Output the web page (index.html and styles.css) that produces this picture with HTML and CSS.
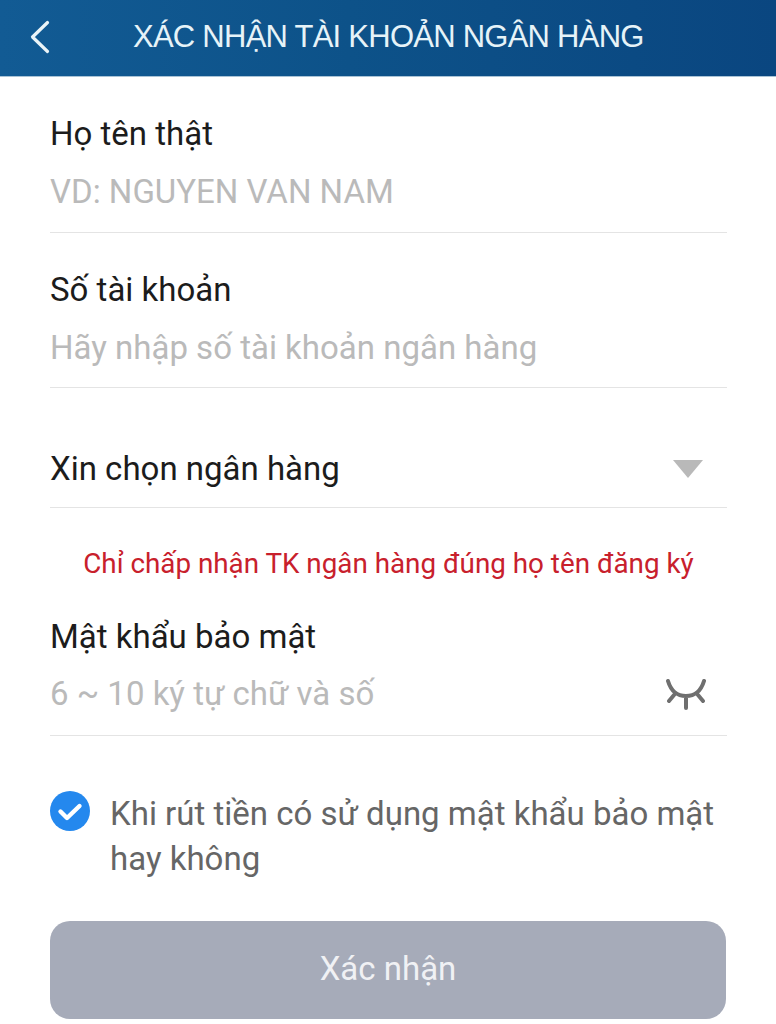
FILE: index.html
```html
<!DOCTYPE html>
<html lang="vi">
<head>
<meta charset="utf-8">
<title>Xác nhận tài khoản ngân hàng</title>
<link rel="stylesheet" href="styles.css">
</head>
<body>
<header class="topbar">
  <svg class="back" viewBox="0 0 22 34" width="22" height="34"><path d="M18.5 2.5 L3.5 17 L18.5 31.5" fill="none" stroke="#eaf4f8" stroke-width="3.2" stroke-linecap="round" stroke-linejoin="round"/></svg>
  <h1 class="title">XÁC NHẬN TÀI KHOẢN NGÂN HÀNG</h1>
</header>
<main class="form">
  <section class="field first">
    <div class="label">Họ tên thật</div>
    <div class="hint">VD: NGUYEN VAN NAM</div>
  </section>
  <section class="field">
    <div class="label">Số tài khoản</div>
    <div class="hint">Hãy nhập số tài khoản ngân hàng</div>
  </section>
  <section class="select">
    <div class="label">Xin chọn ngân hàng</div>
    <svg class="caret" viewBox="0 0 30 18" width="30" height="18"><path d="M0 0 H30 L15 18 Z" fill="#b9b9b9"/></svg>
  </section>
  <p class="notice">Chỉ chấp nhận TK ngân hàng đúng họ tên đăng ký</p>
  <section class="field password">
    <div class="label">Mật khẩu bảo mật</div>
    <div class="hint-row">
      <div class="hint">6 ~ 10 ký tự chữ và số</div>
      <svg class="eye" viewBox="0 0 42 32" width="42" height="32"><path d="M4 3 C7 13 13 18 22 18 C31 18 37 13 40 3 M10 17 L5 23 M34 17 L39 23 M22 18 V30" fill="none" stroke="#6f6f6f" stroke-width="4" stroke-linecap="round"/></svg>
    </div>
  </section>
  <label class="check">
    <svg class="tick" viewBox="0 0 40 40" width="40" height="40"><circle cx="20" cy="20" r="20" fill="#2488ee"/><path d="M10.5 20.5 L17 27 L29.5 15" fill="none" stroke="#fff" stroke-width="4.4" stroke-linecap="round" stroke-linejoin="round"/></svg>
    <span class="check-text">Khi rút tiền có sử dụng mật khẩu bảo mật hay không</span>
  </label>
  <button class="submit" type="button">Xác nhận</button>
</main>
</body>
</html>
```
FILE: styles.css
```css
* { box-sizing: border-box; }
html, body { margin: 0; padding: 0; background: #fff; }
body {
  width: 776px;
  height: 1024px;
  overflow: hidden;
  font-family: Roboto, "Noto Sans", sans-serif;
  color: #1c1c1c;
}
.topbar {
  height: 77px;
  display: flex;
  align-items: center;
  padding: 0 0 3px 29px;
  background: linear-gradient(90deg, #125b94 0%, #0d5289 45%, #0a4680 100%);
  border-bottom: 1px solid #a9c3d6;
}
.back { flex: none; }
.title {
  margin: 0 0 0 82px;
  font-family: "Liberation Sans", Arial, sans-serif;
  font-size: 31px;
  font-weight: 400;
  letter-spacing: -0.75px;
  color: #e6f3f8;
  white-space: nowrap;
}
.form { padding: 0 49px 0 50px; }
.field {
  height: 155px;
  padding-top: 37px;
  border-bottom: 1px solid #e4e4e4;
}
.field.first { height: 156px; }
.label {
  font-size: 33px;
  line-height: 40px;
  color: #1c1c1c;
}
.hint {
  margin-top: 18px;
  font-size: 33px;
  line-height: 40px;
  color: #bababa;
}
.select {
  height: 120px;
  display: flex;
  align-items: center;
  justify-content: space-between;
  padding: 42px 24px 0 0;
  border-bottom: 1px solid #e4e4e4;
}
.notice {
  margin: 0;
  height: 108px;
  padding-top: 40px;
  font-size: 27.8px;
  line-height: 32px;
  text-align: center;
  color: #c8202c;
}
.field.password {
  height: 120px;
  padding-top: 1px;
}
.hint-row {
  display: flex;
  justify-content: space-between;
  align-items: center;
  padding-right: 21px;
  margin-top: 17px;
}
.hint-row .hint { margin-top: 0; }
.check {
  display: flex;
  align-items: flex-start;
  gap: 20px;
  margin-top: 55px;
}
.tick { flex: none; }
.check-text {
  font-size: 33px;
  line-height: 45px;
  color: #666;
}
.submit {
  display: block;
  width: 676px;
  height: 98px;
  margin-top: 40px;
  padding: 0 0 4px;
  border: 0;
  border-radius: 20px;
  background: #a6abb9;
  color: #f0f1f4;
  font-family: Roboto, sans-serif;
  font-size: 33px;
}
```
